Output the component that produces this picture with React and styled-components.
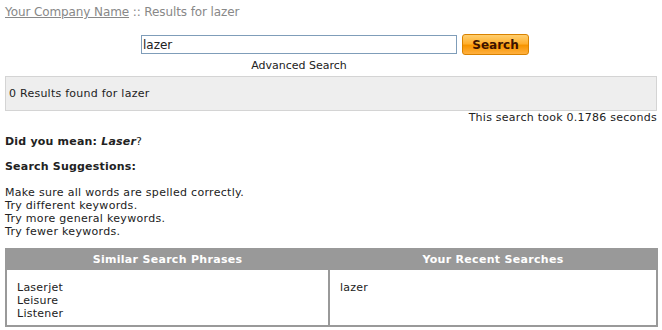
import React from 'react';
import styled, { createGlobalStyle } from 'styled-components';

const similar = ['Laserjet', 'Leisure', 'Listener'];
const recent = ['lazer'];
const tips = [
  'Make sure all words are spelled correctly.',
  'Try different keywords.',
  'Try more general keywords.',
  'Try fewer keywords.',
];

const App = () => {
  return (
    <Page>
      <GlobalStyle />
      <Crumbs>
        <CompanyLink href="#">Your Company Name</CompanyLink> :: Results for lazer
      </Crumbs>
      <SearchForm onSubmit={(e) => e.preventDefault()}>
        <InputColumn>
          <SearchInput defaultValue="lazer" />
          <AdvancedLink href="#">Advanced Search</AdvancedLink>
        </InputColumn>
        <SearchButton type="submit">Search</SearchButton>
      </SearchForm>
      <ResultsBox>0 Results found for lazer</ResultsBox>
      <Timing>This search took 0.1786 seconds</Timing>
      <Heading $gap={10}>
        Did you mean: <em>Laser</em>
        <span>?</span>
      </Heading>
      <Heading $gap={12}>Search Suggestions:</Heading>
      <TipList>
        {tips.map((t) => (
          <li key={t}>{t}</li>
        ))}
      </TipList>
      <Table>
        <Column>
          <HeadCell>Similar Search Phrases</HeadCell>
          <BodyCell>
            {similar.map((s) => (
              <div key={s}>{s}</div>
            ))}
          </BodyCell>
        </Column>
        <Column $last>
          <HeadCell>Your Recent Searches</HeadCell>
          <BodyCell>
            {recent.map((s) => (
              <div key={s}>{s}</div>
            ))}
          </BodyCell>
        </Column>
      </Table>
    </Page>
  );
};

const GlobalStyle = createGlobalStyle`
  body {
    margin: 0;
    background: #fff;
    font-family: "DejaVu Sans", Verdana, sans-serif;
    font-size: 11px;
    color: #222;
  }
`;

const Page = styled.div`
  width: 652px;
  padding: 4px 5px 0 5px;
`;

const Crumbs = styled.div`
  font-size: 12px;
  line-height: 16px;
  letter-spacing: -0.1px;
  color: #888;
`;

const CompanyLink = styled.a`
  color: #888;
  text-decoration: underline;
`;

const SearchForm = styled.form`
  display: flex;
  justify-content: center;
  align-items: flex-start;
  gap: 5px;
  margin: 14px 0 0 8px;
`;

const InputColumn = styled.div`
  display: flex;
  flex-direction: column;
  align-items: center;
`;

const SearchInput = styled.input`
  width: 312px;
  height: 15px;
  margin-top: 1px;
  padding: 1px 1px;
  border: 1px solid #7f9db9;
  font-family: "DejaVu Sans", Verdana, sans-serif;
  font-size: 12px;
  color: #222;
  outline: none;
`;

const SearchButton = styled.button`
  width: 67px;
  height: 21px;
  padding: 0;
  border: 1px solid #d98200;
  border-radius: 3px;
  background: linear-gradient(#ffcf70 0%, #ffb030 45%, #f79500 55%, #ffb040 100%);
  color: #3d1200;
  font-family: "DejaVu Sans", Verdana, sans-serif;
  font-weight: bold;
  font-size: 12px;
`;

const AdvancedLink = styled.a`
  margin-top: 5px;
  color: #222;
  text-decoration: none;
  font-size: 11px;
  line-height: 13px;
`;

const ResultsBox = styled.div`
  margin-top: 4px;
  height: 33px;
  display: flex;
  align-items: center;
  padding: 0 3px;
  background: #eeeeee;
  border: 1px solid #d4d4d4;
  font-size: 11px;
  letter-spacing: 0.25px;
`;

const Timing = styled.div`
  text-align: right;
  font-size: 11px;
  line-height: 14px;
  letter-spacing: 0.25px;
`;

const Heading = styled.div`
  font-weight: bold;
  font-size: 11px;
  line-height: 13px;
  letter-spacing: 0.2px;
  margin-top: ${(p) => p.$gap}px;
  color: #222;

  em {
    font-style: italic;
  }

  span {
    font-weight: normal;
  }
`;

const TipList = styled.ul`
  list-style: none;
  margin: 13px 0 0 0;
  padding: 0;
  line-height: 13px;
  letter-spacing: 0.3px;
`;

const Table = styled.div`
  margin-top: 10px;
  display: grid;
  grid-template-columns: 323px 1fr;
  border: 2px solid #999;
  border-top: none;
  width: 649px;
`;

const Column = styled.div`
  display: flex;
  flex-direction: column;
  border-right: ${(p) => (p.$last ? 'none' : '2px solid #999')};
`;

const HeadCell = styled.div`
  height: 22px;
  background: #999;
  color: #fff;
  font-weight: bold;
  font-size: 11px;
  letter-spacing: 0.3px;
  display: flex;
  align-items: center;
  justify-content: center;
`;

const BodyCell = styled.div`
  height: 55px;
  padding: 11px 10px 0 10px;
  font-size: 11px;
  line-height: 13px;
  letter-spacing: 0.25px;
  box-sizing: border-box;
`;

export default App;
